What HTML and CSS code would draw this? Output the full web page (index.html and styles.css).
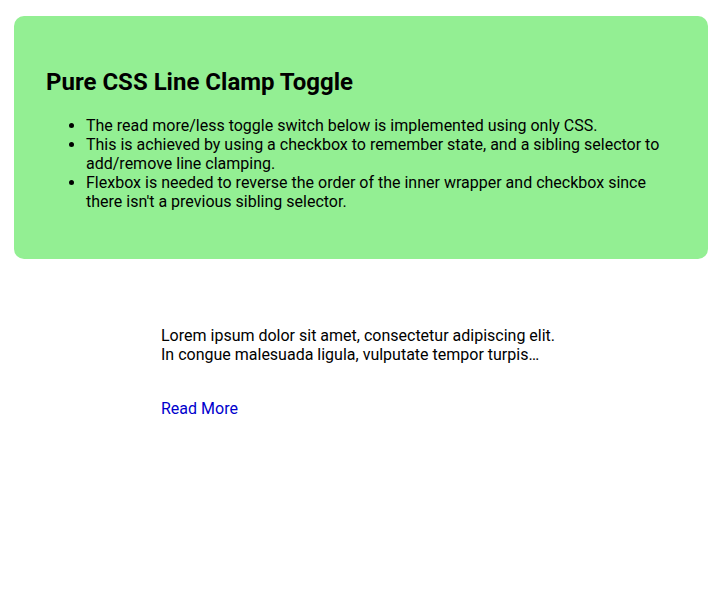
FILE: index.html
```html
<!DOCTYPE html>
<html lang="en">
<head>
<meta charset="utf-8">
<title>Pure CSS Line Clamp Toggle</title>
<link rel="stylesheet" href="styles.css">
</head>
<body>
  <section class="intro">
    <h2 class="intro-title">Pure CSS Line Clamp Toggle</h2>
    <ul class="intro-list">
      <li>The read more/less toggle switch below is implemented using only CSS.</li>
      <li>This is achieved by using a checkbox to remember state, and a sibling selector to add/remove line clamping.</li>
      <li>Flexbox is needed to reverse the order of the inner wrapper and checkbox since there isn't a previous sibling selector.</li>
    </ul>
  </section>

  <div class="clamp">
    <input class="clamp-toggle" type="checkbox" id="clamp-toggle">
    <div class="clamp-body">
      <p class="clamp-text">Lorem ipsum dolor sit amet, consectetur adipiscing elit. In congue malesuada ligula, vulputate tempor turpis porta id. Integer a erat vitae lectus viverra dictum. Nulla facilisi. Sed in commodo nisl, vitae blandit mauris.</p>
    </div>
    <label class="clamp-label" for="clamp-toggle"></label>
  </div>
</body>
</html>
```
FILE: styles.css
```css
html, body {
  margin: 0;
  background: #ffffff;
}

body {
  padding: 16px 14px;
  font-family: Roboto, "Noto Sans", Arial, sans-serif;
  font-size: 16px;
  color: #000000;
}

.intro {
  background: #93ef93;
  border-radius: 10px;
  padding: 32px;
}

.intro-title {
  margin: 20px 0;
  font-size: 24px;
  font-weight: 700;
}

.intro-list {
  margin: 20px 0 16px;
  padding-left: 40px;
}

.clamp {
  width: 400px;
  margin: 67px auto 0;
  display: flex;
  flex-direction: column;
}

.clamp-toggle {
  display: none;
}

.clamp-body {
  order: 0;
}

.clamp-text {
  margin: 0;
  display: -webkit-box;
  -webkit-box-orient: vertical;
  -webkit-line-clamp: 2;
  overflow: hidden;
}

.clamp-toggle:checked ~ .clamp-body .clamp-text {
  display: block;
  -webkit-line-clamp: unset;
}

.clamp-label {
  order: 1;
  margin-top: 35px;
  color: #0000cd;
  cursor: pointer;
}

.clamp-label::after {
  content: "Read More";
}

.clamp-toggle:checked ~ .clamp-label::after {
  content: "Read Less";
}
```
